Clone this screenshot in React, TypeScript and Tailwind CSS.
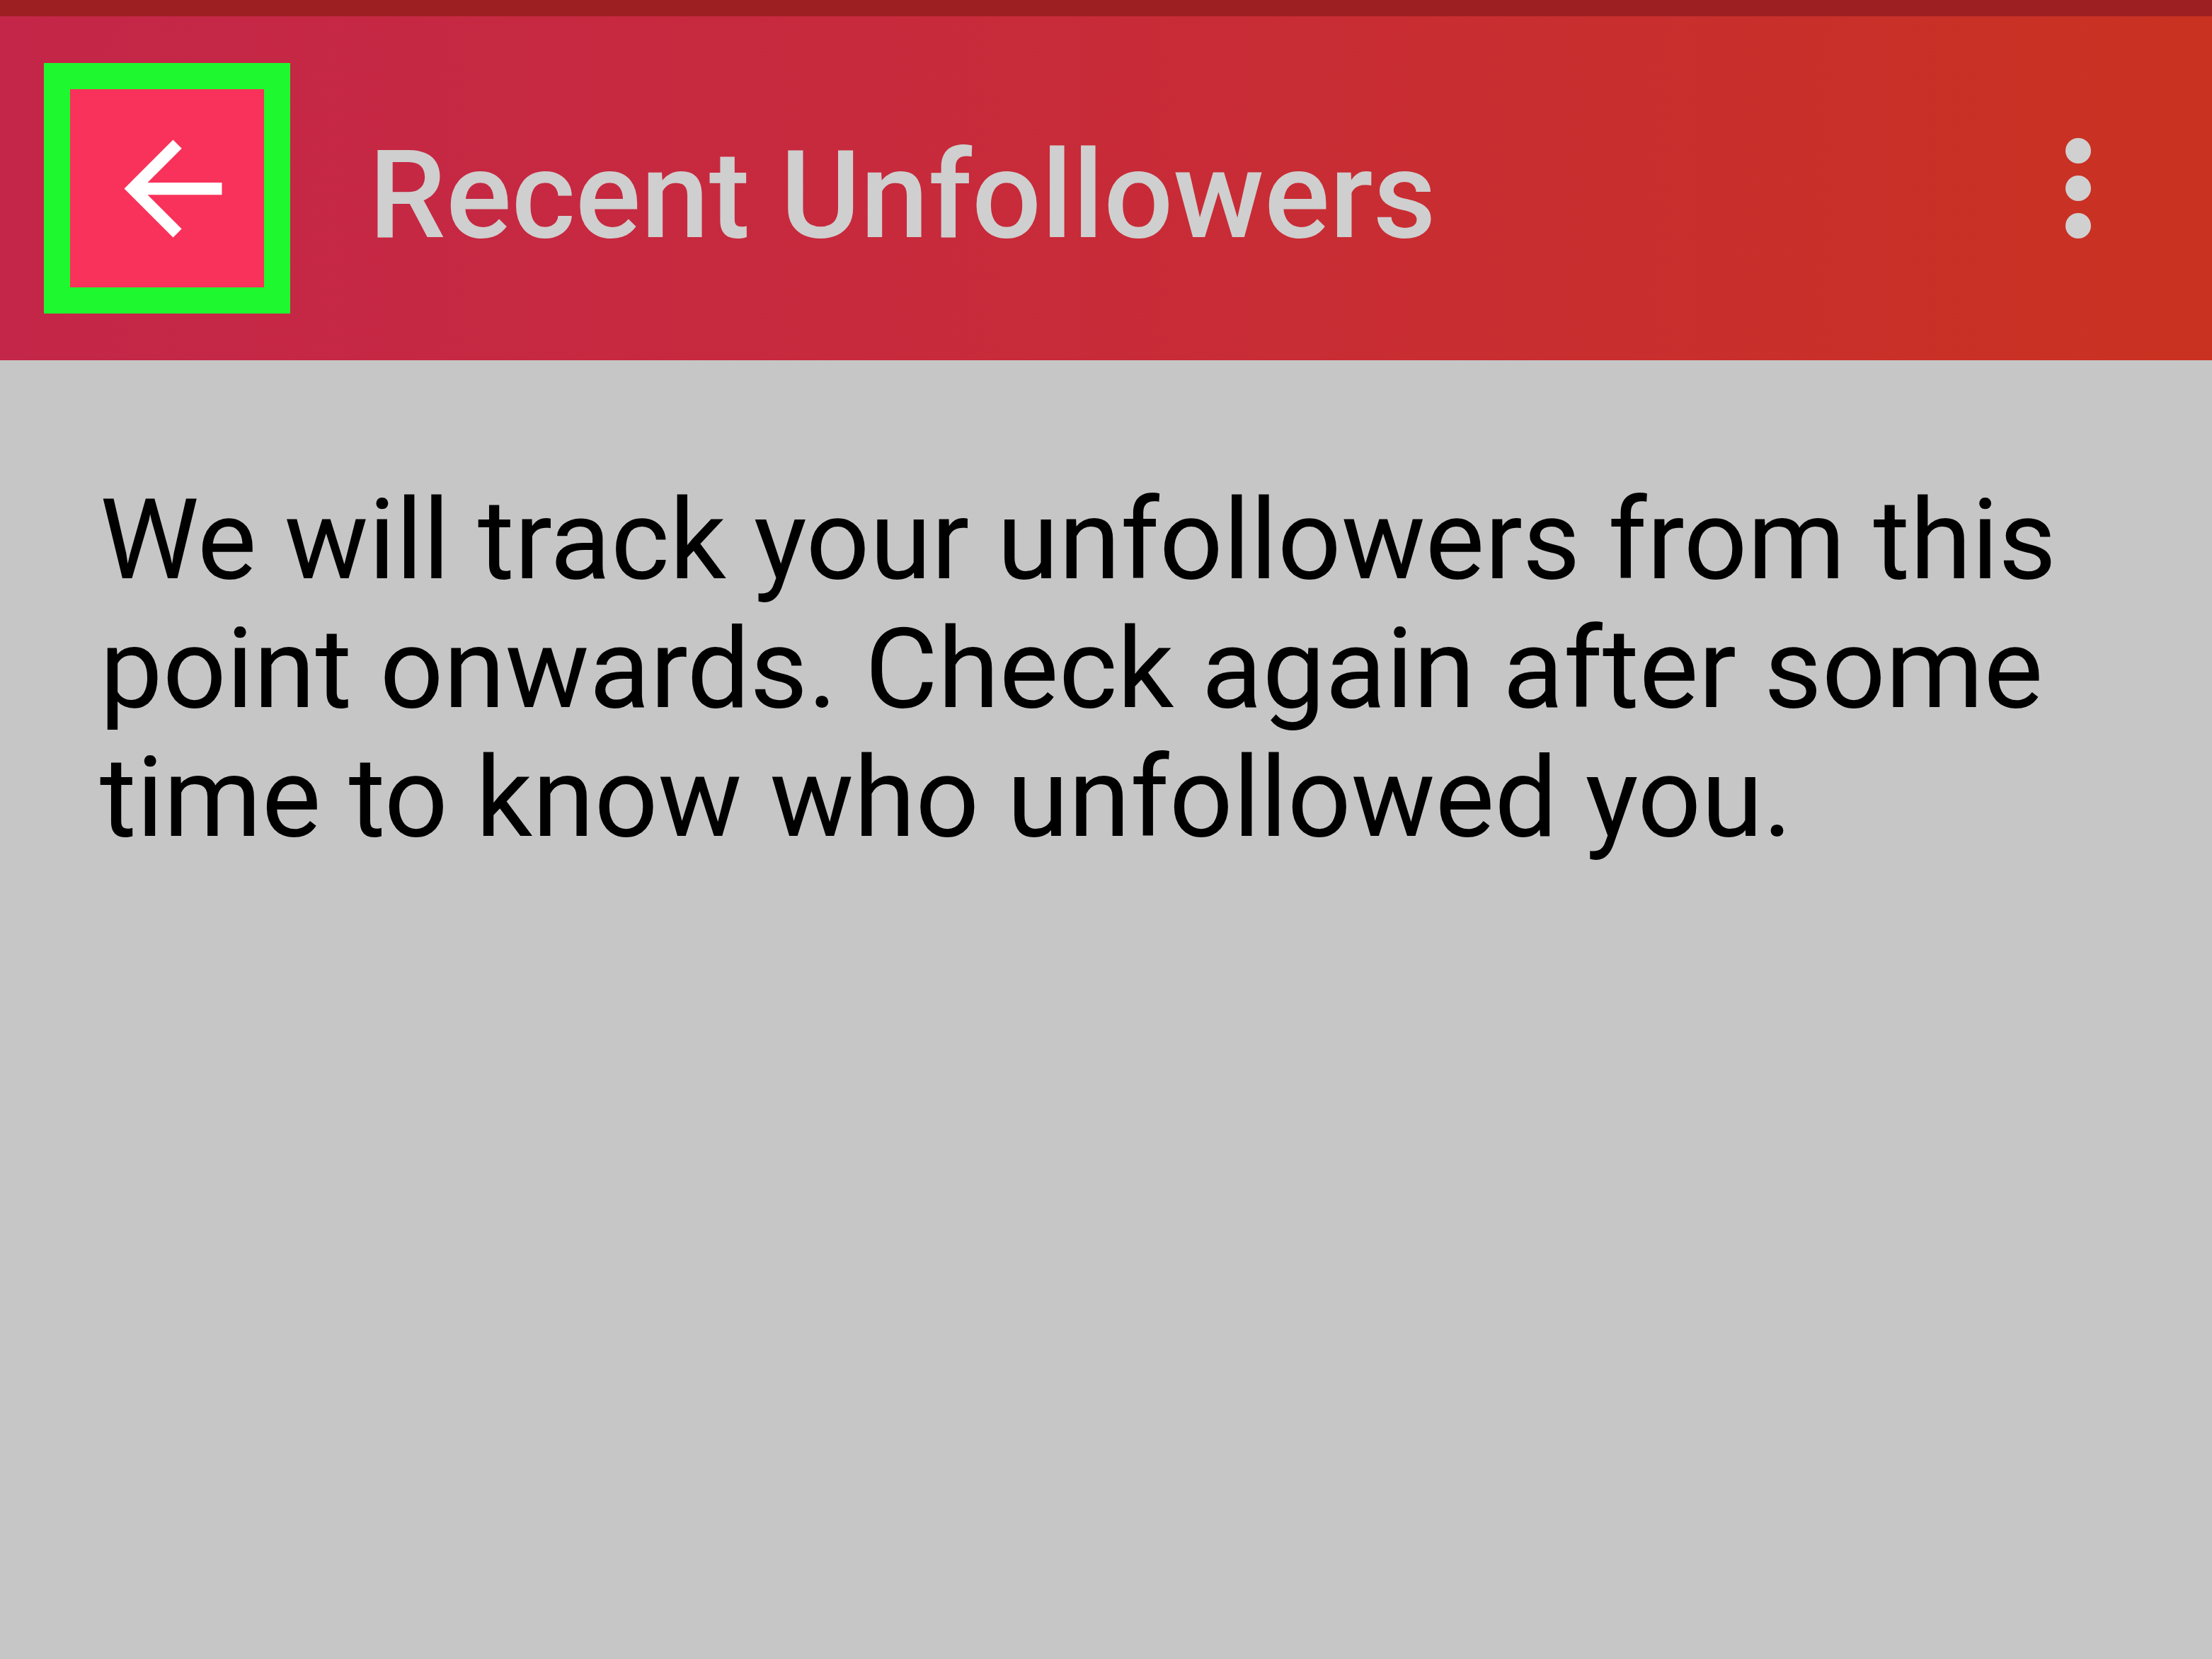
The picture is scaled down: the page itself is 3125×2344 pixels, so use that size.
import React from 'react';

const BackArrow = () => (
  <svg width="207" height="207" viewBox="0 0 24 24" fill="#ffffff">
    <path d="M20 11H7.83l5.59-5.59L12 4l-8 8 8 8 1.41-1.41L7.83 13H20v-2z" />
  </svg>
);

export default function App() {
  return (
    <div className="flex min-h-[2344px] w-full flex-col bg-[#c6c6c6] font-[family-name:Roboto,sans-serif]">
      {/* status strip */}
      <div className="h-[23px] w-full bg-[#9d1f21]" />

      {/* toolbar */}
      <div className="flex h-[486px] w-full items-center bg-gradient-to-r from-[#c42649] via-[#c82b38] to-[#c93220] pl-[62px] pr-[171px]">
        <div className="flex h-[354px] w-[348px] shrink-0 items-center border-[37px] border-[#1ef82f] bg-[#f8325a] pl-[42px]">
          <BackArrow />
        </div>
        <h1 className="ml-[111px] mt-[20px] flex-1 text-[173px] font-medium leading-none text-[#cfcfcf]">
          Recent Unfollowers
        </h1>
        <div className="flex flex-col gap-[17px]">
          <span className="h-[36px] w-[36px] rounded-full bg-[#d0d0d0]" />
          <span className="h-[36px] w-[36px] rounded-full bg-[#d0d0d0]" />
          <span className="h-[36px] w-[36px] rounded-full bg-[#d0d0d0]" />
        </div>
      </div>

      {/* message */}
      <div className="pl-[141px] pr-[120px] pt-[163px]">
        <p className="text-[158px] leading-[182px] text-black">
          We will track your unfollowers from this point onwards. Check again after some time to know who unfollowed you.
        </p>
      </div>
    </div>
  );
}
